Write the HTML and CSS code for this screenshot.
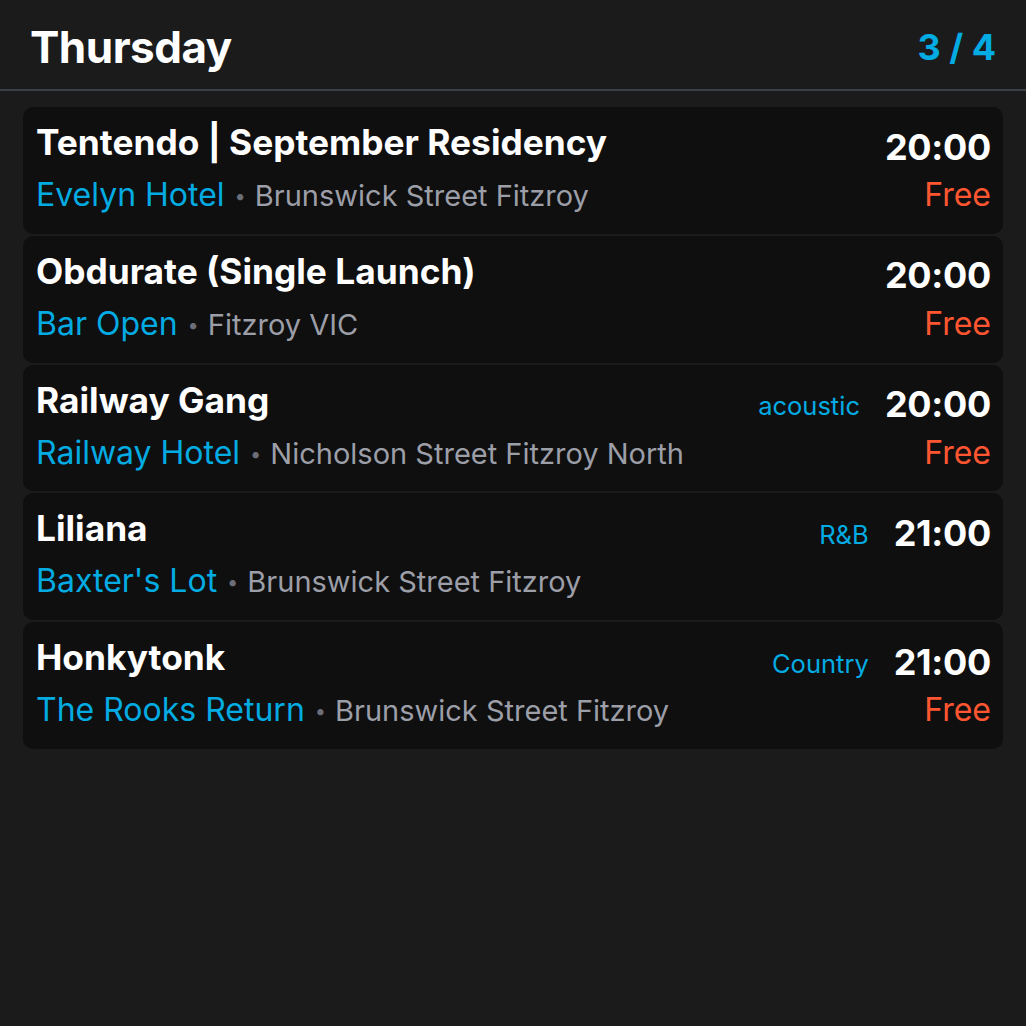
FILE: index.html
```
<!DOCTYPE html>
<html>
<head>
<meta charset="utf-8">
<link rel="stylesheet" href="styles.css">
</head>
<body>
<div class="app">
  <header class="header">
    <h1 class="day">Thursday</h1>
    <div class="count">3 / 4</div>
  </header>
  <main class="list">
    <div class="card">
      <div class="row top">
        <div class="title">Tentendo | September Residency</div>
        <div class="right"><span class="time">20:00</span></div>
      </div>
      <div class="row bottom">
        <div class="place"><span class="venue">Evelyn Hotel</span><span class="dot">•</span><span class="addr">Brunswick Street Fitzroy</span></div>
        <div class="price">Free</div>
      </div>
    </div>
    <div class="card">
      <div class="row top">
        <div class="title">Obdurate (Single Launch)</div>
        <div class="right"><span class="time">20:00</span></div>
      </div>
      <div class="row bottom">
        <div class="place"><span class="venue">Bar Open</span><span class="dot">•</span><span class="addr">Fitzroy VIC</span></div>
        <div class="price">Free</div>
      </div>
    </div>
    <div class="card">
      <div class="row top">
        <div class="title">Railway Gang</div>
        <div class="right"><span class="tag">acoustic</span><span class="time">20:00</span></div>
      </div>
      <div class="row bottom">
        <div class="place"><span class="venue">Railway Hotel</span><span class="dot">•</span><span class="addr">Nicholson Street Fitzroy North</span></div>
        <div class="price">Free</div>
      </div>
    </div>
    <div class="card">
      <div class="row top">
        <div class="title">Liliana</div>
        <div class="right"><span class="tag">R&amp;B</span><span class="time">21:00</span></div>
      </div>
      <div class="row bottom">
        <div class="place"><span class="venue">Baxter's Lot</span><span class="dot">•</span><span class="addr">Brunswick Street Fitzroy</span></div>
        <div class="price"></div>
      </div>
    </div>
    <div class="card">
      <div class="row top">
        <div class="title">Honkytonk</div>
        <div class="right"><span class="tag">Country</span><span class="time">21:00</span></div>
      </div>
      <div class="row bottom">
        <div class="place"><span class="venue">The Rooks Return</span><span class="dot">•</span><span class="addr">Brunswick Street Fitzroy</span></div>
        <div class="price">Free</div>
      </div>
    </div>
  </main>
</div>
</body>
</html>
```
FILE: styles.css
```
* { box-sizing: border-box; }
html, body {
  margin: 0;
  padding: 0;
  background: #1b1b1b;
  font-family: Inter, "Noto Sans", sans-serif;
  color: #fff;
}
.app {
  width: 1026px;
  height: 1026px;
  background: #1b1b1b;
}
.header {
  height: 91px;
  display: flex;
  justify-content: space-between;
  align-items: baseline;
  padding: 20px 30px 0 30px;
  border-bottom: 2px solid #3a3f4a;
}
.day {
  margin: 0;
  font-size: 44px;
  font-weight: 700;
  line-height: 54px;
  letter-spacing: -0.5px;
}
.count {
  font-size: 36px;
  font-weight: 700;
  color: #03abe3;
  line-height: 54px;
  position: relative;
  top: -3px;
}
.list {
  padding: 16px 23px 0 23px;
  display: flex;
  flex-direction: column;
  gap: 2px;
}
.card {
  background: #0f0f0f;
  border-radius: 10px;
  height: 126.75px;
  padding: 15px 12px 0 13px;
}
.row {
  display: flex;
  justify-content: space-between;
  align-items: baseline;
}
.top { height: 43px; }
.title {
  font-size: 35.3px;
  font-weight: 700;
  line-height: 40px;
}
.right {
  display: flex;
  align-items: baseline;
  gap: 25px;
  position: relative;
  top: 4.5px;
}
.tag {
  font-size: 25.5px;
  color: #03abe3;
  position: relative;
  top: -2px;
}
.time {
  font-size: 36px;
  font-weight: 700;
  line-height: 40px;
  letter-spacing: -0.3px;
}
.bottom {
  height: 52px;
  padding-top: 8px;
}
.place {
  display: flex;
  align-items: baseline;
  line-height: 44px;
}
.venue {
  color: #03abe3;
  font-size: 32px;
}
.dot {
  color: #6b6e77;
  font-size: 20px;
  margin: 0 9px 0 10px;
  position: relative;
  top: -3px;
}
.addr {
  color: #9c9ea8;
  font-size: 29px;
}
.price {
  font-size: 32px;
  line-height: 44px;
  color: #ff5631;
}
```
